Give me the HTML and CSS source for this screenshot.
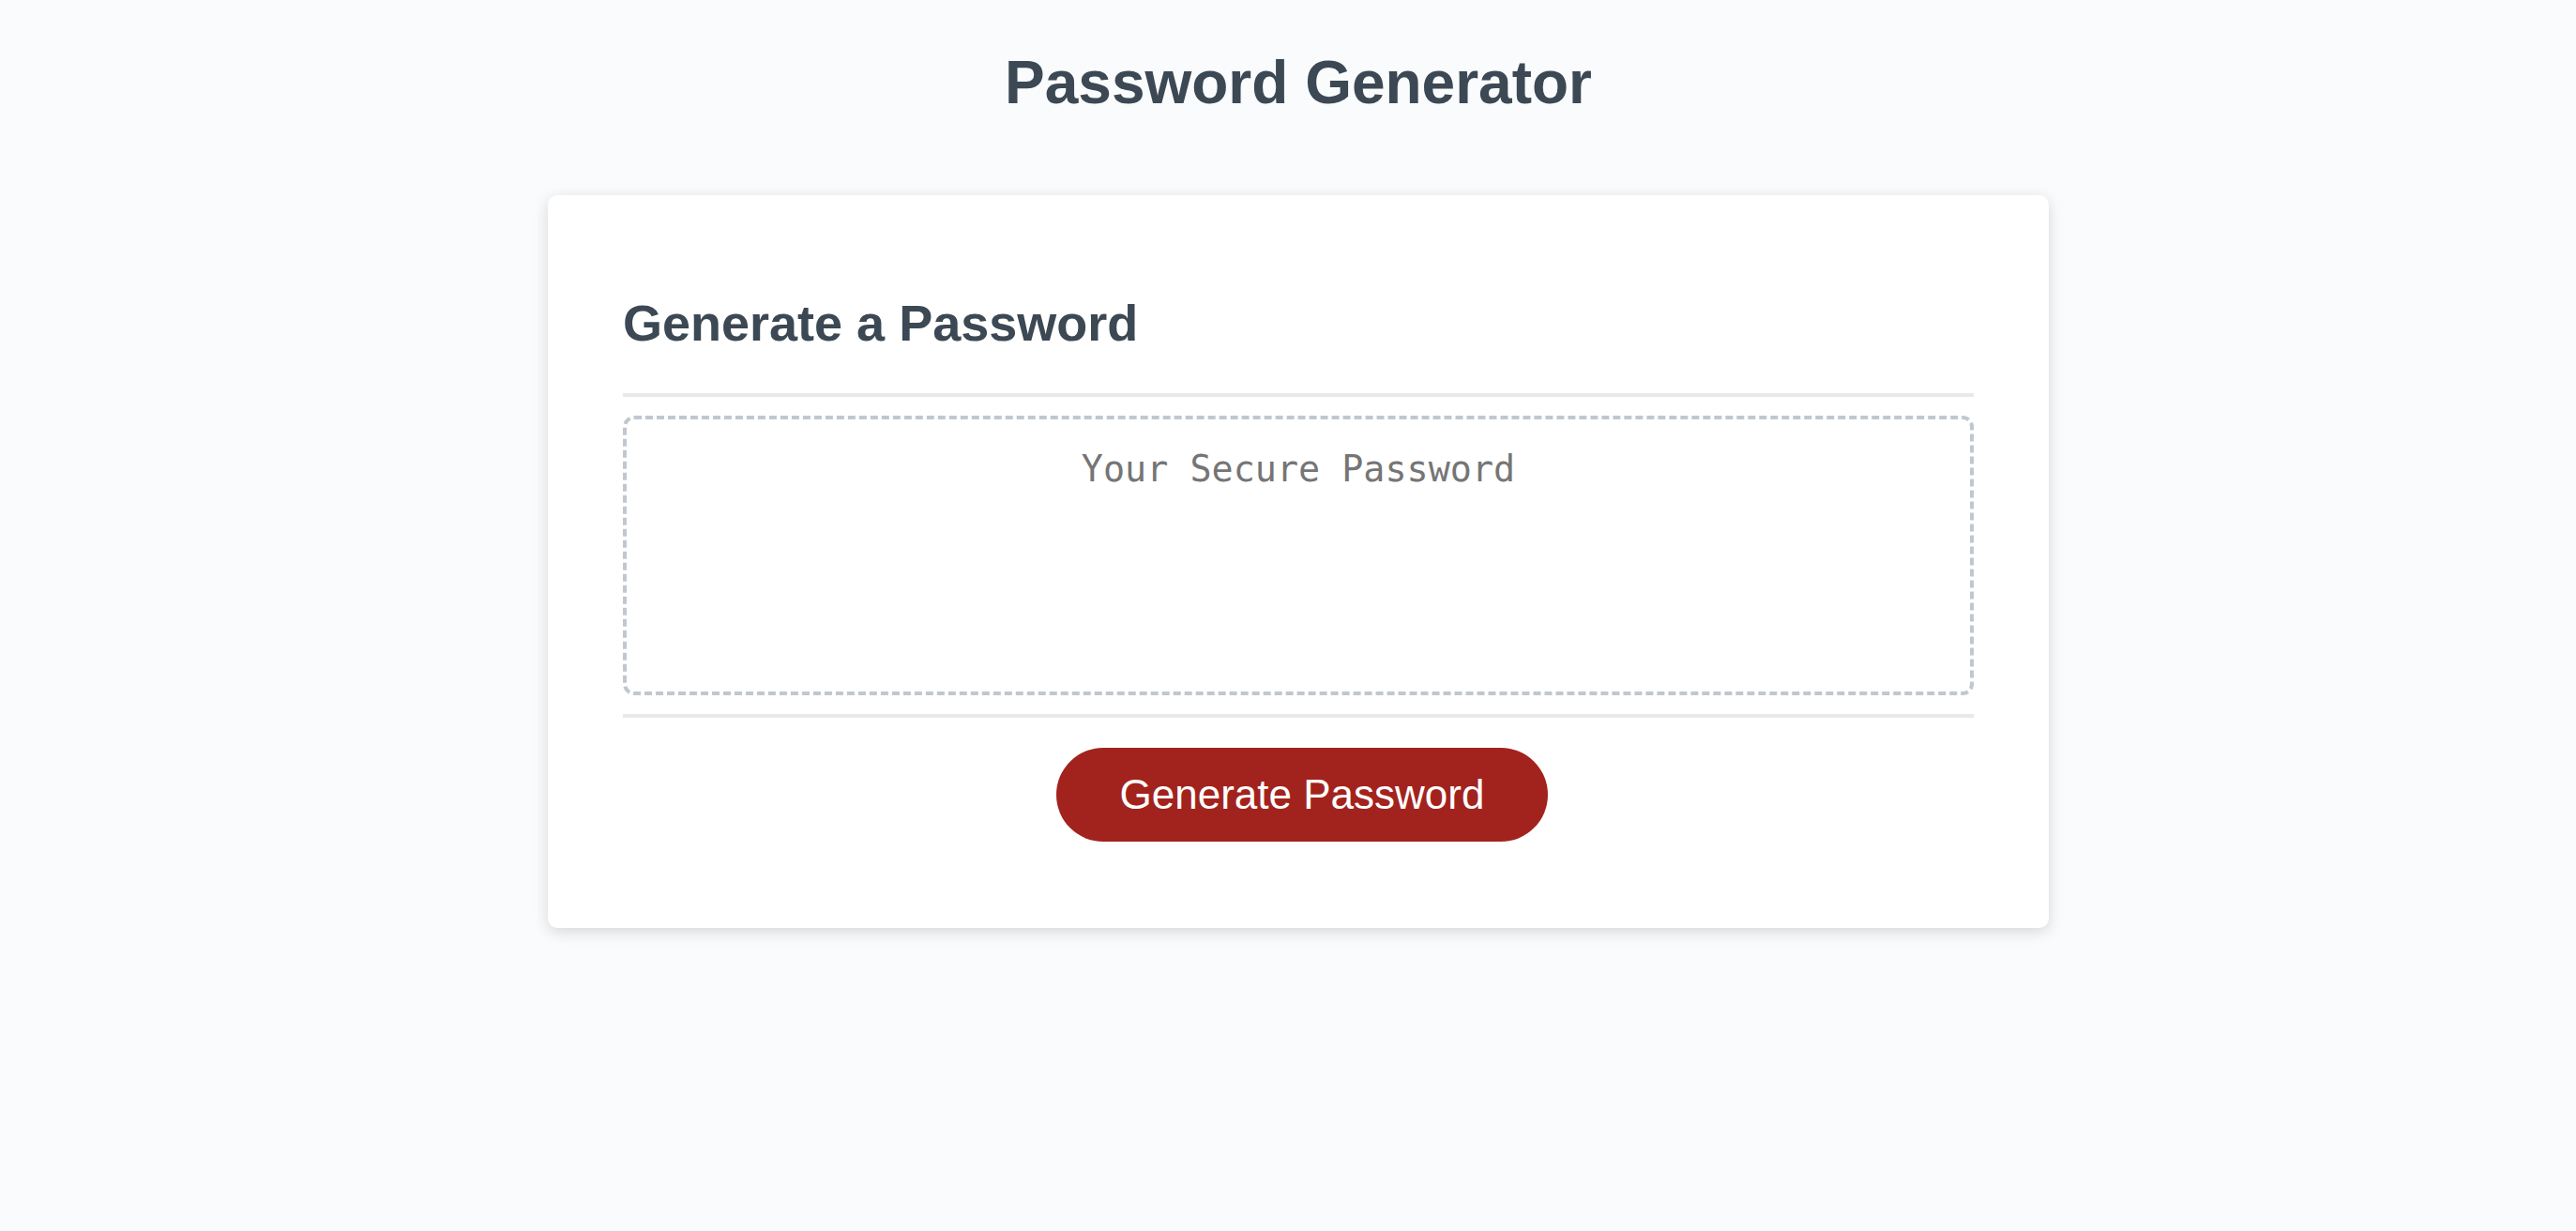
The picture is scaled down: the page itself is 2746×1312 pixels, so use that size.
FILE: index.html
```html
<!DOCTYPE html>
<html lang="en">
<head>
<meta charset="UTF-8">
<title>Password Generator</title>
<link rel="stylesheet" href="styles.css">
</head>
<body>
<div class="wrapper">
  <header class="header">
    <h1 class="title">Password Generator</h1>
  </header>
  <div class="card">
    <div class="card-header">
      <h2 class="card-title">Generate a Password</h2>
    </div>
    <div class="card-body">
      <textarea class="password" readonly placeholder="Your Secure Password" aria-label="Generated Password"></textarea>
    </div>
    <div class="card-footer">
      <button class="btn" type="button">Generate Password</button>
    </div>
  </div>
</div>
</body>
</html>
```
FILE: styles.css
```css
*, *::before, *::after {
  box-sizing: border-box;
}

html, body {
  margin: 0;
  padding: 0;
  height: 100%;
}

body {
  font-family: "Liberation Sans", Arial, sans-serif;
  background-color: #f9fbfd;
}

.wrapper {
  padding: 51px 40px 0 62px;
}

.header {
  text-align: center;
  padding: 0 40px 83px;
  color: #3c4853;
}

.title {
  margin: 0;
  font-size: 64px;
  font-weight: bold;
}

.card {
  background-color: #ffffff;
  border-radius: 10px;
  box-shadow: rgba(0, 0, 0, 0.15) 0 4px 16px 0;
  color: #3c4853;
  font-size: 36px;
  margin: 0 auto;
  max-width: 1600px;
  padding: 60px 80px;
}

.card-title {
  font-size: 54px;
  font-weight: bold;
  margin: 45px 0 44px;
}

.card-header::after,
.card-footer::before {
  content: " ";
  display: block;
  width: 100%;
  background: #e7e9eb;
  height: 4px;
}

.card-body {
  min-height: 200px;
}

.password {
  appearance: none;
  display: block;
  width: 100%;
  padding: 30px 30px 170px;
  font-family: "DejaVu Sans Mono", "Liberation Mono", monospace;
  font-size: 38.4px;
  text-align: center;
  margin: 20px 0 20px;
  border: 4px dashed #c0c7cf;
  border-radius: 12px;
  resize: none;
  overflow: hidden;
  background: #ffffff;
  color: #3c4853;
}

.password::placeholder {
  color: #757575;
}

.card-footer {
  text-align: center;
}

.btn {
  border: none;
  background-color: #a2231d;
  border-radius: 50px;
  color: #ffffff;
  display: inline-block;
  font-family: "Liberation Sans", Arial, sans-serif;
  font-size: 44px;
  line-height: 44px;
  margin: 32px 32px 32px 40px;
  padding: 28px 68px;
  text-align: center;
  cursor: pointer;
}
```
